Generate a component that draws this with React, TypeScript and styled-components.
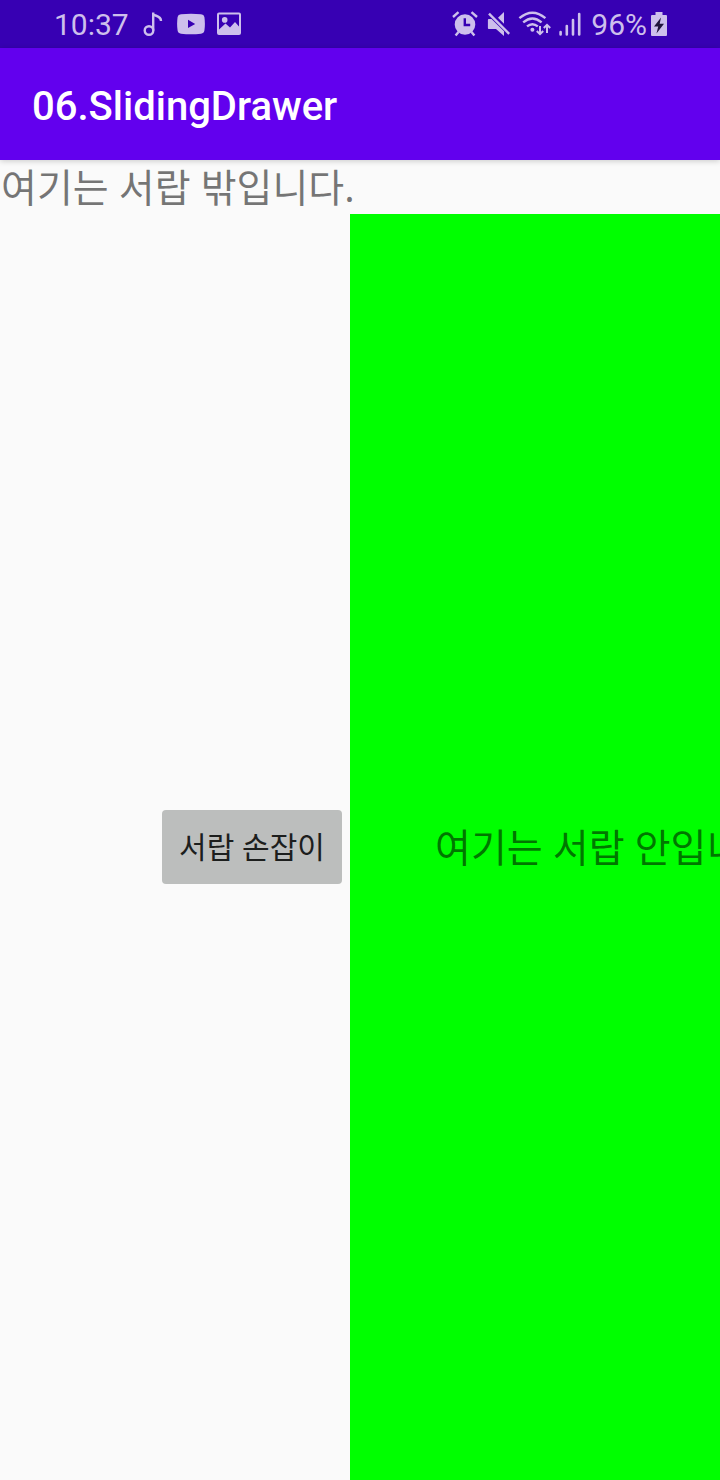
import React from 'react';
import styled, { createGlobalStyle } from 'styled-components';

const GlobalStyle = createGlobalStyle`
  * { box-sizing: border-box; }
  body {
    margin: 0;
    background: #fafafa;
    font-family: Roboto, "Noto Sans CJK KR", sans-serif;
  }
`;

const Screen = styled.div`
  display: flex;
  flex-direction: column;
  min-height: 100vh;
  overflow: hidden;
`;

const StatusBar = styled.div`
  display: flex;
  align-items: center;
  justify-content: space-between;
  height: 48px;
  padding: 0 53px 0 54px;
  background: #3700b3;
  color: #cdbfec;
  font-size: 30px;
  line-height: 48px;
`;

const StatusText = styled.span`
  padding-top: 2px;
`;

const StatusGroup = styled.div<{ $gap: number }>`
  display: flex;
  align-items: center;
  gap: ${({ $gap }) => $gap}px;
`;

const Glyph = styled.svg`
  display: block;
  flex: none;
  fill: currentColor;
`;

const Battery = styled.div`
  display: flex;
  align-items: center;
  gap: 4px;
`;

const AppBar = styled.header`
  position: relative;
  display: flex;
  align-items: center;
  height: 112px;
  padding: 6px 32px 0;
  background: #6200ee;
  box-shadow: 0 1px 6px rgba(0, 0, 0, 0.2);
`;

const Title = styled.h1`
  margin: 0;
  color: #fff;
  font-size: 40px;
  font-weight: 500;
  line-height: 48px;
`;

const Label = styled.p`
  margin: 0;
  padding-left: 1px;
  color: rgba(0, 0, 0, 0.54);
  font-family: "Noto Sans", "Noto Sans CJK KR", sans-serif;
  font-size: 39px;
  font-weight: 400;
  line-height: 54px;
  white-space: nowrap;
`;

const Main = styled.main`
  display: flex;
  flex: 1;
  flex-direction: column;
`;

const SlidingDrawer = styled.section`
  display: grid;
  flex: 1;
  grid-template-columns: 35fr 37fr;
`;

const HandleSide = styled.div`
  display: flex;
  align-items: center;
  justify-content: flex-end;
  padding: 0 8px;
`;

const Handle = styled.button`
  min-width: 180px;
  height: 74px;
  padding: 0 16px;
  border: 0;
  border-radius: 4px;
  background: #bcbebd;
  color: #1c1e1d;
  font-family: "Noto Sans", "Noto Sans CJK KR", sans-serif;
  font-size: 30px;
  font-weight: 400;
  line-height: 44px;
  white-space: nowrap;
`;

const DrawerContent = styled.div`
  display: flex;
  align-items: center;
  min-width: 0;
  padding-left: 84px;
  overflow: hidden;
  background: #00ff00;
`;

const MusicIcon = () => (
  <Glyph width="24" height="26" viewBox="-2 0 24 26" role="img" aria-label="Music">
    <g fill="none" stroke="currentColor" strokeWidth="2.4">
      <circle cx="6" cy="19.5" r="4.3" />
      <path d="M10.2 19.5V1.5M10.2 3C11.4 5.4 18 4.3 18 10" />
    </g>
  </Glyph>
);

const VideoIcon = () => (
  <Glyph width="28" height="22" viewBox="0 0 28 22" role="img" aria-label="Video">
    <path
      fillRule="evenodd"
      d="M4 1.2Q14 .2 24 1.2Q27 1.5 27.4 4Q28.4 11 27.4 17.6Q27 20.4 24 20.8Q14 21.8 4 20.8Q1 20.4.6 17.6Q-.4 11 .6 4Q1 1.5 4 1.2ZM11 6.8V15L18.2 10.9Z"
    />
  </Glyph>
);

const PictureIcon = () => (
  <Glyph width="24" height="24" viewBox="0 0 24 24" role="img" aria-label="Picture">
    <path
      fillRule="evenodd"
      d="M2 .6H22Q24 .6 24 2.6V21Q24 23 22 23H2Q0 23 0 21V2.6Q0 .6 2 .6ZM2 2.6V17.5L8.5 11.5L13 15.5L18 10L22 14.5V2.6Z"
    />
    <circle cx="7.7" cy="7.9" r="2.8" />
  </Glyph>
);

const AlarmIcon = () => (
  <Glyph width="27" height="26" viewBox="0 0 27 26" role="img" aria-label="Alarm">
    <path
      fillRule="evenodd"
      d="M13 3.2A10.3 10.3 0 1 1 13 23.8A10.3 10.3 0 1 1 13 3.2ZM11.6 7.2V15.3H18.2V12.8H14V7.2Z"
    />
    <path
      d="M1 6L6.5 1.2M19.5 1.2L25 6M6.5 21L3.6 24.6M19.5 21L22.4 24.6"
      fill="none"
      stroke="currentColor"
      strokeWidth="2.4"
    />
  </Glyph>
);

const MuteIcon = () => (
  <Glyph width="23" height="26" viewBox="0 0 23 26" role="img" aria-label="Muted">
    <path d="M1.8 8H4.5L17 20.2V25L9 18H1.8Q.9 18 .9 17V9Q.9 8 1.8 8ZM11 6.8L17 1V12.8Z" />
    <path d="M2 2.6L22.2 22.8" fill="none" stroke="currentColor" strokeWidth="2.4" />
  </Glyph>
);

const WifiIcon = () => (
  <Glyph width="33" height="26" viewBox="0 0 33 26" role="img" aria-label="Wi-Fi">
    <g fill="none" stroke="currentColor" strokeWidth="2.4">
      <path d="M1.4 7.2Q14.4 -3.8 27.4 7.2M5.2 11.4Q14.4 3.6 23.6 11.4M9 15.4Q14.4 11 19.8 15.4" />
      <path d="M22 15V23M18.8 20L22 23.2L25.2 20M29 22V14M25.8 17L29 13.8L32.2 17" strokeWidth="2" />
    </g>
    <circle cx="14.4" cy="18.8" r="2" />
  </Glyph>
);

const SignalIcon = () => (
  <Glyph width="24" height="24" viewBox="0 0 24 24" role="img" aria-label="Signal">
    <path
      d="M1.6 20V22.4M7.8 14V22.4M14 8V22.4M20.2 2V22.4"
      fill="none"
      stroke="currentColor"
      strokeWidth="2.6"
      strokeLinecap="round"
    />
  </Glyph>
);

const BatteryIcon = () => (
  <Glyph width="16" height="24" viewBox="0 0 16 24" role="img" aria-label="Charging">
    <path d="M4.5 0H11.5V3H15Q16 3 16 4V23Q16 24 15 24H1Q0 24 0 23V4Q0 3 1 3H4.5Z" />
    <path d="M10 5.5L3 14.5H7.2L5.5 21.5L13 11.8H8.7Z" fill="#20143c" />
  </Glyph>
);

export default function App() {
  return (
    <Screen>
      <GlobalStyle />
      <StatusBar>
        <StatusGroup $gap={12}>
          <StatusText as="time">10:37</StatusText>
          <MusicIcon />
          <VideoIcon />
          <PictureIcon />
        </StatusGroup>
        <StatusGroup $gap={8}>
          <AlarmIcon />
          <MuteIcon />
          <WifiIcon />
          <SignalIcon />
          <Battery>
            <StatusText>96%</StatusText>
            <BatteryIcon />
          </Battery>
        </StatusGroup>
      </StatusBar>
      <AppBar>
        <Title>06.SlidingDrawer</Title>
      </AppBar>
      <Main>
        <Label>여기는 서랍 밖입니다.</Label>
        <SlidingDrawer>
          <HandleSide>
            <Handle type="button">서랍 손잡이</Handle>
          </HandleSide>
          <DrawerContent>
            <Label>여기는 서랍 안입니다.</Label>
          </DrawerContent>
        </SlidingDrawer>
      </Main>
    </Screen>
  );
}
